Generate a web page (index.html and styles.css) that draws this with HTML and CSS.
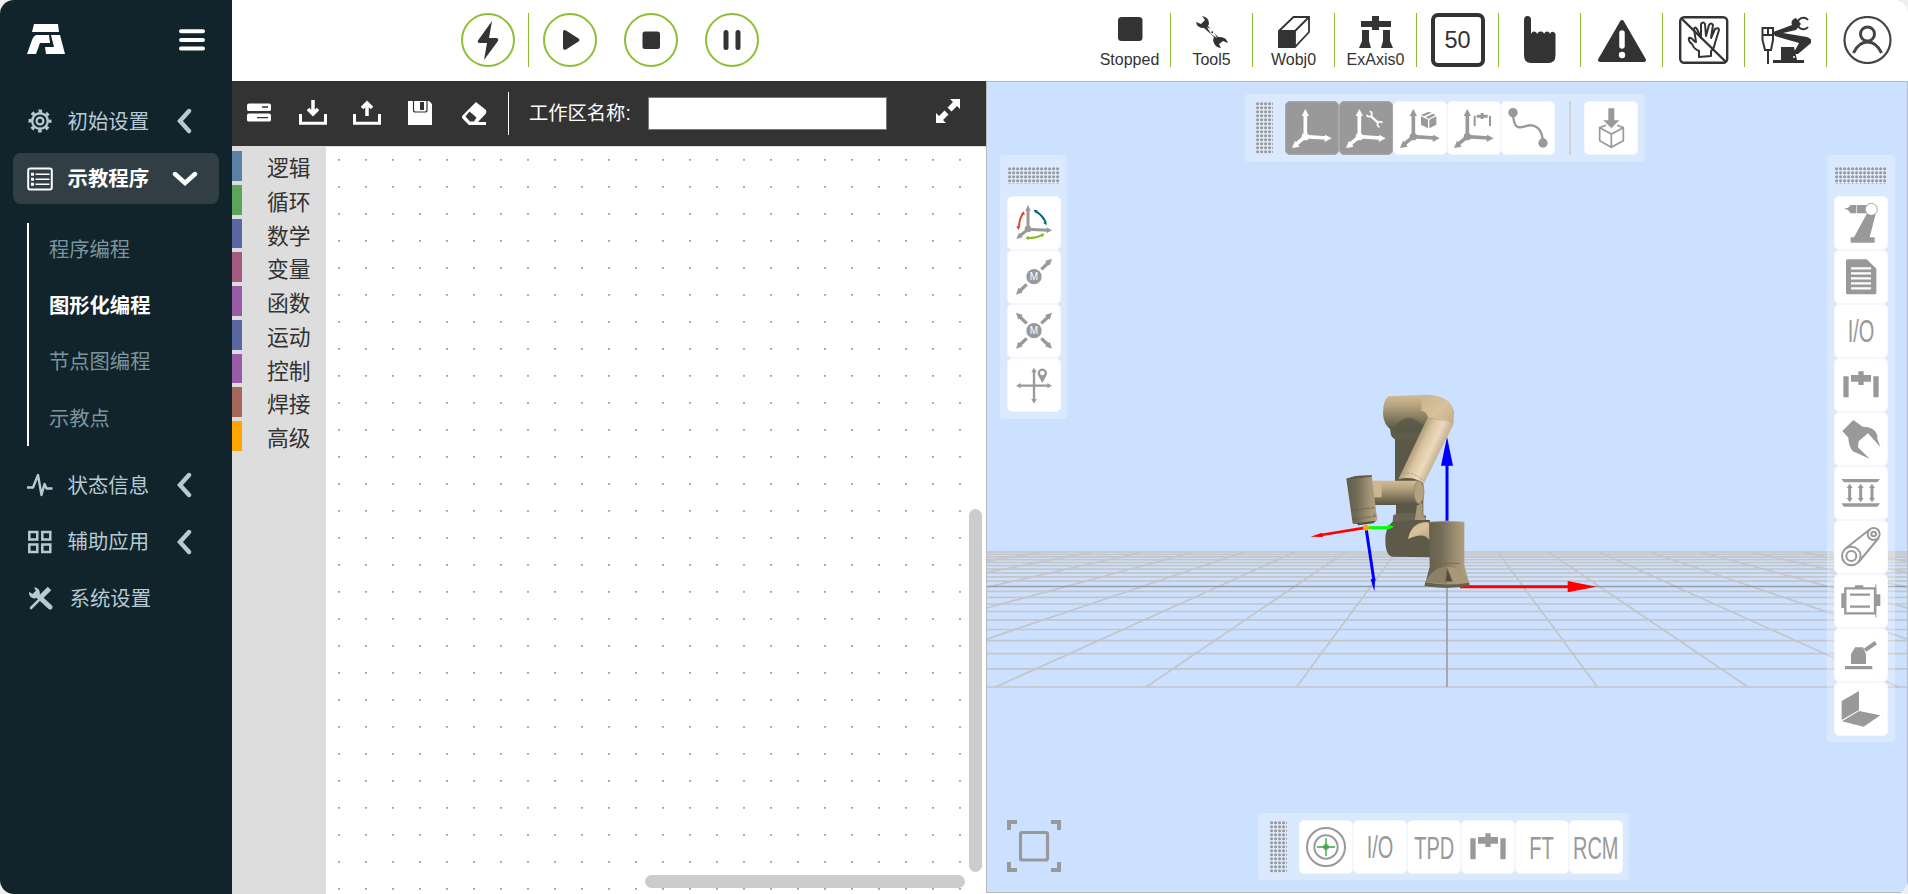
FILE: index.html
```html
<!DOCTYPE html>
<html lang="zh-CN">
<head>
<meta charset="utf-8">
<title>图形化编程</title>
<link rel="stylesheet" href="styles.css">
</head>
<body>
<svg class="defs" aria-hidden="true">
  <defs>
    <symbol id="axes" viewBox="0 0 162 162">
      <path d="M61 107V38M61 107l64 4M61 107L32 131" stroke="currentColor" stroke-width="11" fill="none"/>
      <circle cx="61" cy="107" r="11" fill="currentColor"/>
      <path d="M61 24l11 21H50zM140 112l-21 11 1-22zM21 141l9-22 14 18z" fill="currentColor"/>
    </symbol>
    <symbol id="ext" viewBox="0 0 162 162">
      <path d="M28 55h16v63H28zM118 55h16v63h-16zM51 51h22V40h16v11h22v20H89v10H73V71H51z" fill="currentColor"/>
    </symbol>
    <symbol id="chev" viewBox="0 0 16 26"><path d="M13 3L4 13l9 10" fill="none" stroke="currentColor" stroke-width="4.400" stroke-linecap="round" stroke-linejoin="miter"/></symbol>
    <pattern id="dots" width="4" height="4" patternUnits="userSpaceOnUse"><circle cx="1.600" cy="1.800" r="1.550" fill="#999"/></pattern>
    <pattern id="grid" width="27" height="27" patternUnits="userSpaceOnUse"><path d="M12 12.900h2" stroke="#a4a4a4" stroke-width="1.700"/></pattern>
  </defs>
</svg>
<div class="app">
  <aside class="sidebar">
    <div class="brand">
      <svg class="logo" width="38" height="30" viewBox="0 0 38 30"><path fill="#fff" d="M7 0h24l1 8H5zM10 11h12l1 8H13l-4 11H0L5 16q2-5 5-5zM24 11h9l5 19H19l-1-7h9z"/></svg>
      <svg width="26" height="22" viewBox="0 0 26 22"><path d="M2 2.200h22M2 10.900h22M2 19.600h22" stroke="#fff" stroke-width="4" stroke-linecap="round"/></svg>
    </div>
    <nav class="menu">
      <div class="item">
        <svg class="ico" viewBox="0 0 26 26"><circle cx="13" cy="13" r="7.800" fill="none" stroke="currentColor" stroke-width="2.400"/><circle cx="13" cy="13" r="3.400" fill="none" stroke="currentColor" stroke-width="2.200"/><circle cx="13" cy="13" r="10" fill="none" stroke="currentColor" stroke-width="3" stroke-dasharray="3.600 4.250" stroke-dashoffset="1.800"/></svg>
        <span>初始设置</span><svg class="chev" viewBox="0 0 16 26"><use href="#chev"/></svg>
      </div>
      <div class="item active">
        <svg class="ico" viewBox="0 0 26 26"><rect x="1.200" y="2.500" width="23.600" height="21" rx="2" fill="none" stroke="currentColor" stroke-width="2"/><path d="M8.500 8.300h14M8.500 13.300h14M8.500 18.300h14" stroke="currentColor" stroke-width="1.500"/><path d="M4 8.300h3M4 13.300h3M4 18.300h3" stroke="currentColor" stroke-width="3"/></svg>
        <span>示教程序</span><svg class="chev down" viewBox="0 0 16 26"><use href="#chev"/></svg>
      </div>
      <div class="submenu">
        <span>程序编程</span><span class="current">图形化编程</span><span>节点图编程</span><span>示教点</span>
      </div>
      <div class="item">
        <svg class="ico" viewBox="0 0 26 26"><path d="M0 15.500h6L11 3l3.500 20 3-11 2 4.500h6" fill="none" stroke="currentColor" stroke-width="2.400" stroke-linejoin="round"/></svg>
        <span>状态信息</span><svg class="chev" viewBox="0 0 16 26"><use href="#chev"/></svg>
      </div>
      <div class="item">
        <svg class="ico" viewBox="0 0 26 26"><path d="M2.300 3h8v7.500h-8zM15.300 3h8v7.500h-8zM2.300 15.500h8V23h-8zM15.300 15.500h8V23h-8z" fill="none" stroke="currentColor" stroke-width="2.500"/></svg>
        <span>辅助应用</span><svg class="chev" viewBox="0 0 16 26"><use href="#chev"/></svg>
      </div>
      <div class="item last">
        <svg class="ico" viewBox="0 0 26 26"><path d="M4 23L13 14" stroke="currentColor" stroke-width="2.600" stroke-linecap="round"/><path d="M14 12l8.500-8.500" stroke="currentColor" stroke-width="5"/><path d="M9 9l14 13" stroke="currentColor" stroke-width="5" stroke-linecap="round"/><path d="M7 2.500A5.500 5.500 0 1 1 2 7l4 2 3-3z" fill="currentColor"/></svg>
        <span>系统设置</span>
      </div>
    </nav>
  </aside>
  <div class="main">
    <header class="header">
      <div class="controls">
        <div class="round"><svg viewBox="0 0 50 50"><path d="M29 6L15 25.500q-1 2.500 2 2.500h7l-3 17L35 26q1-3-2-3h-7z" fill="#333"/></svg></div>
        <i class="vline"></i>
        <div class="round"><svg viewBox="0 0 50 50"><path d="M18 17q0-3 3-1.500l12.500 8q2 1.500 0 3l-12.500 8q-3 1-3-1.500z" fill="#333"/></svg></div>
        <div class="round"><svg viewBox="0 0 50 50"><rect x="16.500" y="16.500" width="17.500" height="17.500" rx="2.500" fill="#333"/></svg></div>
        <div class="round"><svg viewBox="0 0 50 50"><path d="M19 17.500v15M31 17.500v15" stroke="#333" stroke-width="5" stroke-linecap="round"/></svg></div>
      </div>
      <div class="status">
        <div class="cell"><svg width="32" height="32" viewBox="0 0 32 32"><rect x="4" y="1" width="24.500" height="24" rx="3.500" fill="#333"/></svg><span>Stopped</span></div>
        <div class="cell"><svg width="34" height="32" viewBox="0 0 34 32"><path d="M7 0q7 1 7 8l-1 2 10 11q8-1 10 6l-5-2-4 3 2 4q-7-1-8-8l1-3L9 12q-7 0-8-6l5 2 4-4z" fill="#333"/><path d="M12 11l6 3 4 8-6-4z" fill="#fff"/><circle cx="17.200" cy="16.200" r="1" fill="#333"/></svg><span>Tool5</span></div>
        <div class="cell"><svg width="32" height="32" viewBox="0 0 32 32"><path d="M1 15L15.500 1H31v15L17 31H1zM17 15L31 1M17 15v16M1 15h16" fill="none" stroke="#333" stroke-width="1.800"/><path d="M0 15h17v17H0z" fill="#333"/></svg><span>Wobj0</span></div>
        <div class="cell"><svg width="34" height="32" viewBox="0 0 34 32"><path d="M2 5h11V0h7v5h12v6H20v3h-7v-3H2zM3 14h7v11l2 7H0l3-7zM24 14h7v11l3 7H22l2-7z" fill="#333"/></svg><span>ExAxis0</span></div>
        <div class="cell"><div class="speed">50</div></div>
        <div class="cell"><svg width="32" height="48" viewBox="0 0 32 48"><path d="M0 4q0-4 3.500-4T7 4v14q1-3 3.500-2.500T13 18q1-3 4-2.500t3 2.500q1-3 3.500-2.500T26 18q1-3 3.500-2t2 4v19q0 8-7 8H7q-7 0-7-8z" fill="#333"/></svg></div>
        <div class="cell"><svg width="50" height="48" viewBox="0 0 50 48"><path d="M25 6L47 44H3z" fill="#333" stroke="#333" stroke-width="4" stroke-linejoin="round"/><path d="M25 17v13" stroke="#fff" stroke-width="5.500" stroke-linecap="round"/><circle cx="25" cy="39" r="3.200" fill="#fff"/></svg></div>
        <div class="cell"><svg width="50" height="48" viewBox="0 0 50 48" fill="none" stroke="#333"><rect x="1.200" y="1.200" width="47" height="45.600" rx="4" stroke-width="2.400"/><path d="M20 41v-6q-5-2-7-7-4-3-3-6 2-1 5 3l2 1-2-13q1-3 3 0l4 9V8q2-3 4 0l1 12 3-11q2-3 4 0l-2 13 4-9q4-2 4 1l-4 13q-1 6-4 8v5z" stroke-width="2" stroke-linejoin="round"/><path d="M3 3l44 43" stroke-width="2.400"/></svg></div>
        <div class="cell"><svg width="50" height="48" viewBox="0 0 50 48"><path d="M1.500 12h10.500v12l-2 10H4L1.500 24zM2 19h10M7 12v7M7 35v13" fill="none" stroke="#333" stroke-width="2"/><path d="M12 16L31 9q-2-5 4-7l5 6-5 6-13 3 24 4q6 2 4 6L37 38h-5l6-11-24-7zM20 31h13l3 13h7v3H12v-3h8z" fill="#333"/><circle cx="33" cy="41" r="1" fill="#fff"/><path d="M47 4a5.800 5.800 0 1 0 0 7" fill="none" stroke="#333" stroke-width="2"/></svg></div>
        <div class="cell user"><svg width="50" height="48" viewBox="0 0 50 48" fill="none" stroke="#444"><circle cx="24.500" cy="24" r="23" stroke-width="2.200"/><circle cx="24.500" cy="18" r="7" stroke-width="3"/><path d="M10.500 37q5-11 14-11t14 11" stroke-width="3"/></svg></div>
      </div>
    </header>
    <div class="work">
      <section class="editor">
        <div class="toolbar">
          <svg class="tb" viewBox="0 0 28 28"><path d="M4 4.500h20q2 0 2 2v4q0 1.500-2 1.500H4q-2 0-2-1.500v-4q0-2 2-2zM4 14.500h20q2 0 2 2v4.500q0 1.500-2 1.500H4Q2 22.500 2 21v-4.500q0-2 2-2z" fill="#fff"/><path d="M17 8h6M12 18.700h11" stroke="#333" stroke-width="1.300"/></svg>
          <svg class="tb" viewBox="0 0 28 28" fill="none" stroke="#fff"><path d="M1.500 15v9.300h25V15" stroke-width="3"/><path d="M14 1v13M9 10l5 5 5-5" stroke-width="3.500"/></svg>
          <svg class="tb" viewBox="0 0 28 28" fill="none" stroke="#fff"><path d="M1.500 15v9.300h25V15" stroke-width="3"/><path d="M14 17V4M9 9l5-5 5 5" stroke-width="3.500"/></svg>
          <svg class="tb" viewBox="0 0 28 28"><path d="M2 2h21l3 3v21H2z" fill="#fff"/><path d="M7.500 2v9q0 2 2 2h9.500q2 0 2-2V2" fill="none" stroke="#333" stroke-width="1.200"/><path d="M14 3h4v8h-4z" fill="#333"/></svg>
          <svg class="tb" viewBox="0 0 28 28"><path d="M16 3l10 8q1 2-.5 4L18 23h8v3H9l-6-6q-2-2 0-4z" fill="#fff"/><path d="M9.500 12.500l7 6-2.500 4h-4l-4.500-5z" fill="#333"/></svg>
          <i class="sep"></i>
          <label class="ws-label" for="ws">工作区名称:</label>
          <input class="ws-input" id="ws" type="text">
          <svg class="expand" viewBox="0 0 26 26"><path d="M15 1h10v10l-3-3-5.500 5.500-4-4L18 4zM1 25V15l3 3 5.500-5.500 4 4L8 22l3 3z" fill="#fff"/></svg>
        </div>
        <div class="blocks">
          <ul class="toolbox">
            <li class="c-logic">逻辑</li><li class="c-loop">循环</li><li class="c-math">数学</li><li class="c-var">变量</li><li class="c-func">函数</li><li class="c-math">运动</li><li class="c-func">控制</li><li class="c-weld">焊接</li><li class="c-adv">高级</li>
          </ul>
          <div class="canvas">
            <svg width="100%" height="100%"><rect width="100%" height="100%" fill="url(#grid)"/></svg>
            <i class="bar-v"></i><i class="bar-h"></i>
          </div>
        </div>
      </section>
      <section class="viewer">
        <svg class="scene" viewBox="987 82 920 810" width="920" height="810">
          <defs>
            <linearGradient id="gv" x2="0" y2="1"><stop offset="0" stop-color="#d2bb94"/><stop offset=".3" stop-color="#b7a480"/><stop offset=".75" stop-color="#777057"/><stop offset="1" stop-color="#565443"/></linearGradient>
            <linearGradient id="gh"><stop offset="0" stop-color="#615c4a"/><stop offset=".35" stop-color="#736b56"/><stop offset=".75" stop-color="#a39475"/><stop offset="1" stop-color="#b8a582"/></linearGradient>
            <linearGradient id="gd" gradientUnits="userSpaceOnUse" x1="398" y1="230" x2="478" y2="268"><stop offset="0" stop-color="#ab9877"/><stop offset=".3" stop-color="#dcc5a0"/><stop offset=".6" stop-color="#ecd9bd"/><stop offset="1" stop-color="#b9a481"/></linearGradient>
            <linearGradient id="ge" x2=".7" y2="1"><stop offset="0" stop-color="#cbb58f"/><stop offset=".5" stop-color="#d8c29d"/><stop offset="1" stop-color="#bba782"/></linearGradient>
          </defs>
          <g stroke="#c4c5c8" stroke-width="1.700">
            <path d="M987 687h920M987 668.800h920M987 653.600h920M987 640.600h920M987 629.500h920M987 619.900h920M987 611.500h920M987 604h920M987 597.400h920M987 591.400h920M987 581.200h920M987 576.800h920M987 572.800h920M987 569.100h920M987 565.700h920M987 562.500h920M987 559.600h920M987 556.900h920M987 554.400h920M987 552h920"/>
            <path d="M940 552L-58 687M990.700 552L92.500 687M1041.400 552L243 687M1092.100 552L393.500 687M1142.800 552L544 687M1193.500 552L694.500 687M1244.200 552L845 687M1294.900 552L995.500 687M1345.600 552L1146 687M1396.300 552L1296.500 687M1497.700 552L1597.500 687M1548.400 552L1748 687M1599.100 552L1898.500 687M1649.800 552L2049 687M1700.500 552L2199.500 687M1751.200 552L2350 687M1801.900 552L2500.500 687M1852.600 552L2651 687M1903.300 552L2801.500 687"/>
          </g>
          <path d="M987 586.500h920M1447 552v135" stroke="#999da5" stroke-width="1.600"/>
          <g transform="translate(1280 370) scale(.33333)">
            <path d="M501 460V280" stroke="#00f" stroke-width="9"/><path d="M501 200l18 87h-36z" fill="#00f"/>
            <path d="M540 650h325" stroke="#f00" stroke-width="9"/><path d="M950 650l-87 17v-34z" fill="#f00"/>
            <path d="M345 195h85v245h-82V335h-3z" fill="#5b5848"/>
            <path d="M330 176h105l-5 32h-85q-13-8-13-20z" fill="#605c4a"/>
            <path d="M325 79L440 74q80 5 82 60l-70 45-115 2q-27-15-28-50 0-40 16-52z" fill="url(#gv)"/>
            <path d="M345 181q5-32 40-38 25 0 55 36l-10 10h-85z" fill="#5a5747" opacity=".8"/>
            <path d="M425 76q65-6 90 32 10 18 5 55L495 210 446 146q-6-22-22-23z" fill="url(#ge)"/>
            <path d="M442 145q35-6 78 18L431 342q-30-26-76-14z" fill="url(#gd)"/>
            <path d="M450 145q25 0 44 11M360 314q36-14 66 16" fill="none" stroke="#a08d6d" stroke-width="2" stroke-dasharray="7 4"/>
            <path d="M340 435q45-14 98 2v25H337z" fill="#696452"/><path d="M412 400h16v35l10 10v22l-36-3z" fill="#a89777"/>
            <path d="M337 456q-22 15-21 57 1 45 22 47l112 2V450h-55z" fill="#5e5a49"/>
            <path d="M384 507q10-49 55-51l14 5v53l-15-14q-18-10-54 7z" fill="url(#ge)"/>
            <path d="M278 332h140v73H278z" fill="url(#gv)"/><path d="M278 332h27v50h-25z" fill="#cdb792"/>
            <ellipse cx="417" cy="367" rx="15" ry="34" fill="#b4a17e" stroke="#8b7e64" stroke-width="2"/>
            <path d="M199 326l28-8 48-2 17 135q-28 15-74 10z" fill="url(#gh)"/><path d="M199 326l28-8 48-2v4l-74 9z" fill="#5f5a49"/><path d="M213 421l72-8M216 448l76-10M284 430v8" stroke="#5b5646" stroke-width="2" stroke-dasharray="12 3" fill="none"/><path d="M230 460l58-8-8 8-45 6z" fill="#4f4d3e"/>
            <path d="M447 456q52-6 106 0v130l16 58q-65 15-135 3l15-57z" fill="url(#gh)"/>
            <path d="M435 637q25-45 66-46 45 0 66 45-65 13-132 1z" fill="#a89878"/><path d="M435 637q25-45 66-46v50z" fill="#8b8068"/>
            <path d="M435 638q65 13 133 0v10q-70 10-134 0z" fill="#67604d"/><path d="M502 596l-5 38h20zM450 580h90" fill="#504c3e" stroke="#6b6451" stroke-width="2"/>
            <path d="M447 456q52-6 106 0" stroke="#c8b38d" stroke-width="2" fill="none"/>
            <path d="M258 473l24 160" stroke="#00f" stroke-width="9"/><path d="M283 664l-11-36 14-3z" fill="#00f"/>
            <path d="M258 473l-135 22" stroke="#f00" stroke-width="8"/><path d="M92 500l34-12 3 13z" fill="#f00"/>
            <path d="M258 473h66" stroke="#0f0" stroke-width="9"/><path d="M343 470l-20-7v16z" fill="#0f0"/>
            <circle cx="258" cy="473" r="9" fill="#ffa500"/>
          </g>
        </svg>
        <div class="panel top">
          <svg class="grip tall"><rect width="20" height="52" fill="url(#dots)"/></svg>
          <div class="btns">
            <div class="btn on"><svg viewBox="0 0 162 162"><use href="#axes"/></svg></div>
            <div class="btn on"><svg viewBox="0 0 162 162"><use href="#axes"/><path d="M94 44l25 23" stroke="#fff" stroke-width="7"/><path d="M92 31a8 8 0 1 1-9 10M130 66a8 8 0 1 0-8 12" fill="none" stroke="#fff" stroke-width="5"/></svg></div>
            <div class="btn"><svg viewBox="0 0 162 162"><use href="#axes"/><path d="M84 46l21 10v26L84 71zM130 46l-21 10v26l21-11zM84 42l23-10 8 3-22 11zM98 49l22-11 8 4-21 11z" fill="#999"/></svg></div>
            <div class="btn"><svg viewBox="0 0 162 162"><use href="#axes"/><path d="M80 44h6v31h-6zM126 44h6v31h-6zM89 41h12v-5h9v5h12v9h-12v4h-9v-4H89z" fill="#999"/></svg></div>
            <div class="btn"><svg viewBox="0 0 162 162"><path d="M36 35c2 70 32 35 56 38 28 3 33 30 34 53" fill="none" stroke="#999" stroke-width="7"/><circle cx="36" cy="35" r="14" fill="#999"/><circle cx="126" cy="126" r="14" fill="#999"/></svg></div>
          </div>
          <i class="psep"></i>
          <div class="btn"><svg viewBox="0 0 162 162"><path d="M73 22h18v36h15L82 82 58 58h15z" fill="#999"/><path d="M66 73L47 80v39l35 20 36-20V80l-19-7M47 80l35 19 36-19M82 99v40" fill="none" stroke="#999" stroke-width="5"/></svg></div>
        </div>
        <div class="panel left">
          <svg class="grip wide"><rect width="52" height="20" fill="url(#dots)"/></svg>
          <div class="btn"><svg viewBox="0 0 162 162"><path d="M63 100V40M63 100l60 3M63 100L38 120" stroke="#999" stroke-width="9"/><circle cx="63" cy="99" r="10" fill="#999"/><path d="M63 26l8 18H55zM135 103l-16 9v-18zM28 129l8-19 11 14z" fill="#999"/><g fill="none" stroke-width="6"><path d="M36 92q1-23 11-38" stroke="#d9452f"/><path d="M88 47q20 13 27 31" stroke="#00608c"/><path d="M64 126q25 0 42-9" stroke="#84bd2a"/></g><path d="M34 102l-6-11h12zM51 45l-9 9 11 4z" fill="#d9452f"/><path d="M80 41l12 2-7 9zM119 88l-10-7 9-6z" fill="#00608c"/><path d="M55 126l10-7v14zM113 114l-11-2 4 12z" fill="#84bd2a"/></svg></div>
          <div class="btn"><svg viewBox="0 0 162 162"><path d="M103 58l20-19M59 103l-20 19" stroke="#999" stroke-width="10"/><path d="M135 26l-7 21-14-14zM27 134l7-21 14 14z" fill="#999"/><circle cx="81" cy="80" r="23" fill="#999"/><text class="m" x="81" y="91">M</text></svg></div>
          <div class="btn"><svg viewBox="0 0 162 162"><path d="M103 58l20-19M59 103l-20 19M59 58L39 39M103 103l20 19" stroke="#999" stroke-width="10"/><path d="M135 26l-7 21-14-14zM27 134l7-21 14 14zM27 26l7 21 14-14zM135 134l-7-21-14 14z" fill="#999"/><circle cx="81" cy="80" r="23" fill="#999"/><text class="m" x="81" y="91">M</text></svg></div>
          <div class="btn"><svg viewBox="0 0 162 162"><path d="M38 83h86M81 42v82" stroke="#999" stroke-width="7"/><path d="M27 83l14-8v16zM135 83l-14-8v16zM81 29l-8 14h16zM81 137l-8-14h16z" fill="#999"/><path d="M106 75L94 53q-5-8 1-16 11-11 22 0 6 8 1 16z" fill="#999"/><circle cx="106" cy="45" r="7" fill="#fff"/></svg></div>
        </div>
        <div class="panel right">
          <svg class="grip wide"><rect width="52" height="20" fill="url(#dots)"/></svg>
          <div class="btn"><svg viewBox="0 0 162 162"><path d="M30 38l12-3 8-8h17v25H50l-8-10zM69 27h36v25H69zM98 54h27l-18 70h15v16H50v-16h10z" fill="#999"/><circle cx="112" cy="40" r="18" fill="#fff" stroke="#999" stroke-width="2.500"/></svg></div>
          <div class="btn"><svg viewBox="0 0 162 162"><path d="M40 28h58l29 28v72q0 5-5 5H41q-5 0-5-5V33q0-5 4-5z" fill="#999"/><path d="M51 55h60M51 70h60M51 85h60M51 100h60M51 115h60" stroke="#fff" stroke-width="7"/></svg></div>
          <div class="btn"><svg viewBox="0 0 162 162"><text class="lbl" x="41" y="72.500" transform="scale(1 1.570)">I/O</text></svg></div>
          <div class="btn"><svg viewBox="0 0 162 162"><use href="#ext"/></svg></div>
          <div class="btn"><svg viewBox="0 0 162 162"><path d="M58 24L25 57l18 20q0 22 13 41l51 22-35-34 2-18 28-24 37 41-10-28q5-5-7-21-12-12-36-12z" fill="#999"/></svg></div>
          <div class="btn"><svg viewBox="0 0 162 162"><path d="M22 39h116l-8 10H30zM22 112h116l-8 10H30z" fill="#999"/><path d="M47 63v38M80 63v38M114 63v38" stroke="#999" stroke-width="9"/><path d="M47 53l9 13H38zM80 53l9 13H71zM114 53l9 13h-18zM47 109l9-13H38zM80 109l9-13H71zM114 109l9-13h-18z" fill="#999"/></svg></div>
          <div class="btn"><svg viewBox="0 0 162 162" fill="none" stroke="#999" stroke-width="6"><circle cx="52" cy="108" r="28"/><circle cx="52" cy="108" r="15"/><circle cx="119" cy="42" r="18"/><circle cx="119" cy="42" r="7"/><path d="M34 86l72-57M74 126l60-72"/></svg></div>
          <div class="btn"><svg viewBox="0 0 162 162"><path d="M34 43h89v75H34zM48 62h60M48 98h60" fill="none" stroke="#999" stroke-width="7"/><path d="M22 58h10v44H22zM124 31h3v99h-3zM126 61h13v35h-13zM63 34h25v8H63z" fill="#999"/></svg></div>
          <div class="btn"><svg viewBox="0 0 162 162"><path d="M33 114h82v10H33zM51 108V79l12-21h24l9 20v30zM89 62l33-23 7 10-32 22z" fill="#999"/></svg></div>
          <div class="btn"><svg viewBox="0 0 162 162"><path d="M23 57l52-30v57l-52 30zM75 87l64 13-50 34-65-16z" fill="#999"/></svg></div>
        </div>
        <div class="panel bottom">
          <svg class="grip tall"><rect width="20" height="52" fill="url(#dots)"/></svg>
          <div class="btns">
            <div class="btn"><svg viewBox="0 0 162 162"><g fill="none" stroke="#999" stroke-width="6"><circle cx="81" cy="81" r="57"/><circle cx="81" cy="81" r="35"/></g><circle cx="81" cy="81" r="9" fill="#999"/><path d="M54 81h54M81 54v54" stroke="#2eae2e" stroke-width="4"/></svg></div>
            <div class="btn"><svg viewBox="0 0 162 162"><text class="lbl" x="41" y="73" transform="scale(1 1.570)">I/O</text></svg></div>
            <div class="btn"><svg viewBox="0 0 162 162"><text class="lbl" x="22" y="74.500" transform="scale(1 1.570)">TPD</text></svg></div>
            <div class="btn"><svg viewBox="0 0 162 162"><use href="#ext"/></svg></div>
            <div class="btn"><svg viewBox="0 0 162 162"><text class="lbl" x="43" y="74.500" transform="scale(1 1.570)">FT</text></svg></div>
            <div class="btn"><svg viewBox="0 0 162 162"><text class="lbl" x="12" y="74.500" transform="scale(1 1.570)">RCM</text></svg></div>
          </div>
        </div>
        <svg class="focus" viewBox="0 0 54 52"><path d="M2 10V2h8M44 2h8v8M52 42v8h-8M10 50H2v-8" fill="none" stroke="#999" stroke-width="4"/><rect x="13.500" y="12.500" width="27" height="27.500" rx="1.500" fill="none" stroke="#999" stroke-width="3.200"/></svg>
      </section>
    </div>
  </div>
</div>
</body>
</html>
```
FILE: styles.css
```css
* { box-sizing: border-box; }
body { margin: 0; background: #eee; font-family: "Liberation Sans", "Noto Sans CJK SC", sans-serif; color: #333; overflow: hidden; }
.defs { position: absolute; width: 0; height: 0; }
.app { display: flex; width: 1908px; height: 894px; border-radius: 14px; overflow: hidden; background: #fff; }

.sidebar { width: 232px; background: #11242b; color: #b5cad3; flex: none; }
.brand { display: flex; justify-content: space-between; align-items: center; padding: 24px 27px 0; height: 54px; }
.brand svg:last-child { margin-top: 1px; }
.menu { padding-top: 39px; }
.item { display: flex; align-items: center; height: 56.5px; margin: 0 13px; padding-left: 14px; font-size: 20.400px; }
.item span { margin-left: 15px; width: 82px; line-height: 30px; padding-top: 1px; white-space: nowrap; }
.item.last span { margin-left: 17px; }
.ico { width: 26px; height: 26px; flex: none; margin-left: -.500px; }
.chev { width: 16px; height: 26px; margin-left: 26.500px; }
.chev.down { transform: rotate(-90deg); margin-left: 27.500px; }
.item.active { height: 51px; margin-top: 3.500px; background: #313f45; border-radius: 8px; color: #fff; font-weight: bold; }
.submenu { display: flex; flex-direction: column; margin: 19px 0 11px 27px; height: 223px; border-left: 2px solid #fff; padding-left: 20px; font-size: 20.300px; color: #7b959f; }
.submenu span { flex: none; height: 56.200px; line-height: 55px; }
.submenu .current { color: #fff; font-weight: bold; }

.main { flex: 1; display: flex; flex-direction: column; min-width: 0; }
.header { display: flex; justify-content: space-between; align-items: center; height: 81px; padding: 0 0 1px 229px; }
.controls { display: flex; align-items: center; }
.round { width: 54px; height: 54px; border: 2.500px solid #8dbf35; border-radius: 50%; margin-right: 27px; }
.round:first-child { margin-right: 13px; }
.round svg { display: block; width: 50px; height: 50px; }
.vline { width: 1px; height: 54px; background: #8dbf35; margin-right: 14px; }
.status { display: flex; }
.cell { display: flex; flex-direction: column; align-items: center; justify-content: center; width: 82px; height: 54px; border-right: 1px solid #8dbf35; font-size: 16px; }
.cell svg { display: block; }
.cell span { line-height: 18px; margin: 3px 0 -5px; height: 18px; }
.cell.user { width: 81px; border: 0; }
.speed { width: 54px; height: 54px; border: 4px solid #333; border-radius: 7px; font-size: 23.500px; line-height: 47px; text-align: center; }

.work { display: flex; flex: 1; min-height: 0; }
.editor { width: 754px; display: flex; flex-direction: column; }
.toolbar { display: flex; align-items: center; height: 65px; background: #333; padding-left: 13px; }
.tb { width: 28px; height: 28px; margin: -1px 25.800px 0 0; flex: none; }
.sep { width: 1px; height: 43px; background: #fff; margin-left: -6px; }
.ws-label { color: #fff; font-size: 19.300px; width: 104px; margin-left: 20px; padding-bottom: 4px; white-space: nowrap; }
.ws-input { width: 239px; height: 33px; margin-left: 15px; border: 1px solid #767676; background: #fff; padding: 0 4px; }
.expand { width: 26px; height: 26px; margin: -5px 0 0 48.500px; }
.blocks { display: flex; flex: 1; border-top: 1px solid #ddd; }
.toolbox { width: 94px; margin: 0; padding: 4px 0 0; list-style: none; background: #ddd; }
.toolbox li { height: 29.750px; margin-bottom: 4px; border-left: 10px solid var(--hue); padding-left: 25px; font-size: 21.800px; line-height: 35px; }
.c-logic { --hue: #5b80a5; }
.c-loop { --hue: #5ba55b; }
.c-math { --hue: #5b67a5; }
.c-var { --hue: #a55b80; }
.c-func { --hue: #995ba5; }
.c-weld { --hue: #a5675b; }
.c-adv { --hue: #ffa500; }
.canvas { position: relative; flex: 1; }
.canvas > svg { display: block; }
.bar-v, .bar-h { position: absolute; background: #ccc; border-radius: 7px; }
.bar-v { right: 4px; top: 362px; width: 13px; height: 363px; }
.bar-h { left: 319px; bottom: 6px; width: 320px; height: 13px; }

.viewer { position: relative; flex: 1; height: 812px; border: 1px solid #bbb; background: #cce0ff; overflow: hidden; }
.scene { display: block; }
.panel { position: absolute; display: flex; align-items: center; background: rgba(255,255,255,.3); border-radius: 4px; }
.btns { display: flex; width: 270px; }
.btn { width: 54px; height: 54px; flex: none; border: 1px solid #f3f7ff; border-radius: 5px; background: #fff; color: #999; }
.btn svg { display: block; width: 54px; height: 54px; margin: -1px; }
.btn.on { background: #999; color: #fff; border-color: #a5a8ad; }
.top { left: 258px; top: 12px; width: 400px; height: 68px; padding-left: 11px; }
.bottom { left: 271px; top: 731px; width: 371px; height: 67px; padding-left: 12px; }
.left, .right { flex-direction: column; top: 73px; padding-top: 12px; }
.left { left: 13px; width: 67px; height: 264px; }
.right { right: 12px; width: 68px; height: 587px; }
.grip.tall { width: 17px; height: 52px; margin-right: 12px; flex: none; }
.grip.wide { width: 52px; height: 17px; margin-bottom: 12px; flex: none; }
.psep { width: 2px; height: 54px; background: #d3d3d3; margin: 0 13px 0 14px; }
.bottom .btns { width: 324px; }
.m { font: 30px "Liberation Sans", sans-serif; fill: #fff; text-anchor: middle; }
.lbl { font: 60px "Liberation Sans", sans-serif; fill: #999; }
.focus { position: absolute; left: 20px; top: 738px; width: 54px; height: 52px; }
```
